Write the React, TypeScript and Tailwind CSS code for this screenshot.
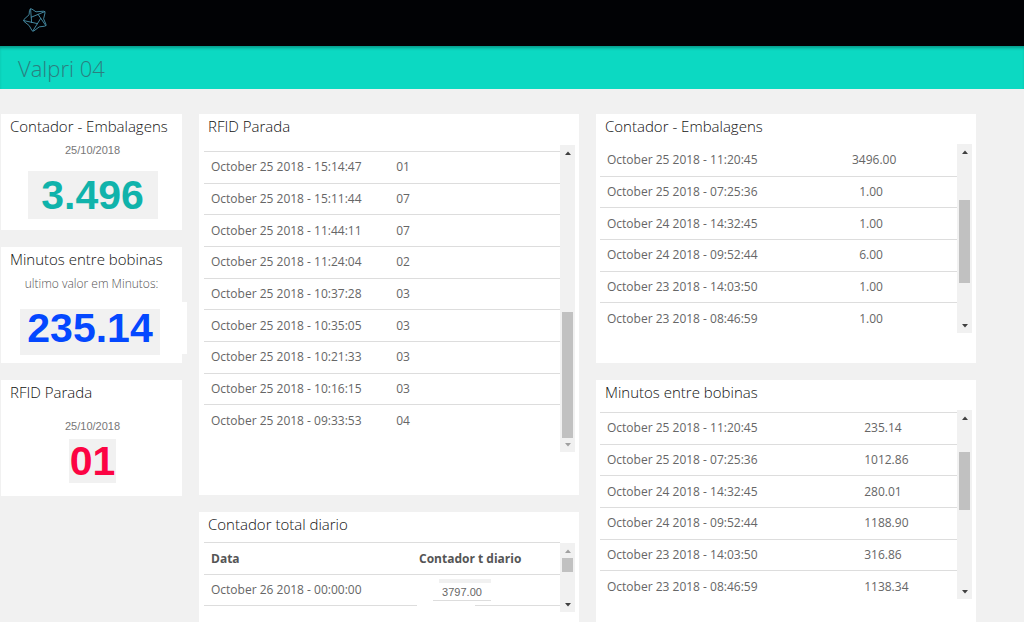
import type { ReactNode } from "react";

type Row = [string, string];

const rfidRows: Row[] = [
  ["October 25 2018 - 15:14:47", "01"],
  ["October 25 2018 - 15:11:44", "07"],
  ["October 25 2018 - 11:44:11", "07"],
  ["October 25 2018 - 11:24:04", "02"],
  ["October 25 2018 - 10:37:28", "03"],
  ["October 25 2018 - 10:35:05", "03"],
  ["October 25 2018 - 10:21:33", "03"],
  ["October 25 2018 - 10:16:15", "03"],
  ["October 25 2018 - 09:33:53", "04"],
];

const counterRows: Row[] = [
  ["October 25 2018 - 11:20:45", "3496.00"],
  ["October 25 2018 - 07:25:36", "1.00"],
  ["October 24 2018 - 14:32:45", "1.00"],
  ["October 24 2018 - 09:52:44", "6.00"],
  ["October 23 2018 - 14:03:50", "1.00"],
  ["October 23 2018 - 08:46:59", "1.00"],
];

const minuteRows: Row[] = [
  ["October 25 2018 - 11:20:45", "235.14"],
  ["October 25 2018 - 07:25:36", "1012.86"],
  ["October 24 2018 - 14:32:45", "280.01"],
  ["October 24 2018 - 09:52:44", "1188.90"],
  ["October 23 2018 - 14:03:50", "316.86"],
  ["October 23 2018 - 08:46:59", "1138.34"],
];

function Logo() {
  return (
    <svg
      viewBox="0 0 24 24"
      className="h-6 w-6"
      fill="none"
      stroke="#4a93ad"
      strokeWidth="0.9"
      strokeLinejoin="round"
      strokeLinecap="round"
      aria-hidden="true"
    >
      <path d="M6.6 2 Q7 0.3 8.8 1 L13 3.8 L20.4 3.2 Q22.4 3.2 22 5 L20.6 10.8 L23 16.4 Q23.4 18 21.6 18.2 L16.2 18.9 L11 22.8 Q9.6 23.8 8.8 22.2 L6.2 17.6 L1 13.4 Q0.2 12.4 1 11.4 L5.8 7 Z" />
      <path d="M7.6 0.9 L8.6 14.4 M21.8 3.6 L8.3 9.2 M22.8 17.6 L15.2 6.6 M9.8 23 L17.7 10.4 M0.8 12.6 L14.4 15.6" />
    </svg>
  );
}

function Card({
  title,
  className = "",
  children,
}: {
  title: string;
  className?: string;
  children: ReactNode;
}) {
  return (
    <section className={`bg-white ${className}`}>
      <h2 className="pl-[9px] text-[15px] leading-6 font-light whitespace-nowrap text-[#111]">{title}</h2>
      {children}
    </section>
  );
}

function Arrow({ down = false, muted = false }: { down?: boolean; muted?: boolean }) {
  return (
    <svg viewBox="0 0 6 4" className={`h-1 w-1.5 ${muted ? "fill-[#a0a0a0]" : "fill-[#404040]"}`} aria-hidden="true">
      <path d={down ? "M0 0H6L3 3.5Z" : "M0 4H6L3 0.5Z"} />
    </svg>
  );
}

function ScrollTrack({
  thumb,
  className = "",
  upMuted,
  downMuted,
}: {
  thumb: string;
  className?: string;
  upMuted?: boolean;
  downMuted?: boolean;
}) {
  return (
    <div className={`flex w-[15px] shrink-0 flex-col items-center bg-[#f1f1f1] ${className}`}>
      <div className="flex h-[15px] items-center">
        <Arrow muted={upMuted} />
      </div>
      <div className="min-h-0 w-[11px] flex-1">
        <div className={`bg-[#c1c1c1] ${thumb}`} />
      </div>
      <div className="flex h-[15px] items-center">
        <Arrow down muted={downMuted} />
      </div>
    </div>
  );
}

function DataTable({
  label,
  rows,
  className,
  dateClass,
  valueClass,
}: {
  label: string;
  rows: Row[];
  className: string;
  dateClass: string;
  valueClass: string;
}) {
  return (
    <table aria-label={label} className={`w-full table-fixed border-separate border-spacing-0 text-xs leading-5 text-[#666] ${className}`}>
      <tbody>
        {rows.map(([date, value]) => (
          <tr key={date} className="group">
            <td className={`border-t border-[#ddd] p-0 pl-[7px] whitespace-nowrap ${dateClass}`}>{date}</td>
            <td className={`border-t border-[#ddd] p-0 ${valueClass}`}>{value}</td>
          </tr>
        ))}
      </tbody>
    </table>
  );
}

export default function App() {
  return (
    <div className="flex min-h-screen flex-col bg-[#f1f1f1] font-['Open_Sans',sans-serif]">
      <header className="flex h-[46px] items-center bg-[#010205] pb-1.5 pl-[23px]">
        <a href="#" aria-label="Home">
          <Logo />
        </a>
      </header>
      <div className="flex h-[43px] items-center bg-[#0cd9c2] pl-[18px] shadow-[inset_0_3px_3px_-1px_rgba(0,80,75,0.45)]">
        <h1 className="text-[22px] leading-8 font-light text-[#2b7f80]">Valpri 04</h1>
      </div>

      <main className="grid flex-1 grid-cols-[181fr_380fr_380fr] gap-[17px] pt-[25px] pr-12 pl-px">
        <div className="flex flex-col gap-[17px]">
          <Card title="Contador - Embalagens" className="h-[116px]">
            <div className="flex flex-col items-center pl-0.5 font-['Liberation_Sans',sans-serif]">
              <p className="mt-1 text-[11px] leading-4 text-[#777]">25/10/2018</p>
              <p className="mt-[13px] w-[130px] bg-[#f1f1f1] text-center text-[41px] leading-[48px] font-bold text-[#10b3ab]">
                3.496
              </p>
            </div>
          </Card>

          <Card title="Minutos entre bobinas" className="relative h-[116px]">
            <div className="absolute top-[55px] -right-[5px] h-[52px] w-[5px] bg-white" />
            <p className="mt-1 text-center text-xs leading-[18px] font-light text-[#555]">ultimo valor em Minutos:</p>
            <p className="mt-4 ml-[19px] w-[140px] bg-[#f1f1f1] pb-2 text-center font-['Liberation_Sans',sans-serif] text-[41px] leading-[38px] font-bold text-[#0448ff]">
              235.14
            </p>
          </Card>

          <Card title="RFID Parada" className="h-[116px]">
            <div className="flex flex-col items-center pl-0.5 font-['Liberation_Sans',sans-serif]">
              <p className="mt-[14px] text-[11px] leading-4 text-[#777]">25/10/2018</p>
              <p className="mt-[5px] bg-[#f1f1f1] px-px text-[41px] leading-[44px] font-bold text-[#fc0443]">01</p>
            </div>
          </Card>
        </div>

        <div className="flex flex-col gap-[17px]">
          <Card title="RFID Parada" className="h-[381px]">
            <div className="mt-[7px] flex h-[307px] items-stretch pr-1 pl-[5px]">
              <div className="min-w-0 flex-1 pt-1.5">
                <DataTable
                  label="RFID Parada"
                  rows={rfidRows}
                  className="h-[285px]"
                  dateClass="w-[54%]"
                  valueClass=""
                />
              </div>
              <ScrollTrack thumb="mt-[152px] h-[126px]" downMuted />
            </div>
          </Card>

          <Card title="Contador total diario" className="flex-1">
            <div className="mt-1.5 flex items-start pr-1 pl-[5px]">
              <table className="h-16 min-w-0 flex-1 table-fixed border-separate border-spacing-0 text-left text-xs leading-5 text-[#666]">
                <thead>
                  <tr className="h-8">
                    <th className="w-[213px] border-t border-[#ddd] p-0 pl-[7px] font-bold text-[#555]">Data</th>
                    <th className="border-t border-[#ddd] p-0 pl-[2px] font-bold whitespace-nowrap text-[#555]">
                      Contador t diario
                    </th>
                  </tr>
                </thead>
                <tbody>
                  <tr className="h-8">
                    <td className="border-y border-[#ddd] p-0 pl-[7px]">October 26 2018 - 00:00:00</td>
                    <td className="border-t border-[#ddd] p-0">
                      <div className="flex h-[31px] flex-col">
                        <div className="mt-1 ml-[22px] h-1 w-[52px] bg-[#f1f1f1]" />
                        <div className="ml-4 h-[18px] w-[58px] border-b border-[#ddd] text-center font-['Liberation_Sans',sans-serif] text-[11px] leading-[18px]">
                          3797.00
                        </div>
                        <div className="mt-auto ml-[58px] h-px bg-[#ddd]" />
                      </div>
                    </td>
                  </tr>
                </tbody>
              </table>
              <ScrollTrack thumb="h-[14px]" className="mt-px h-[69px]" upMuted />
            </div>
          </Card>
        </div>

        <div className="flex flex-col gap-[17px]">
          <Card title="Contador - Embalagens" className="h-[249px]">
            <div className="mt-1.5 flex h-[189px] pr-1 pl-1">
              <div className="min-w-0 flex-1 overflow-hidden">
                <DataTable
                  label="Contador - Embalagens"
                  rows={counterRows}
                  className="h-[190px]"
                  dateClass="w-[53%] group-first:border-white"
                  valueClass="pr-1 text-center group-first:border-white group-first:pr-0 group-first:pl-0.5"
                />
              </div>
              <ScrollTrack thumb="mt-[41px] h-[83px]" />
            </div>
          </Card>

          <Card title="Minutos entre bobinas" className="flex-1">
            <div className="mt-1.5 flex h-[189px] pr-1 pl-1">
              <div className="min-w-0 flex-1 overflow-hidden pt-0.5">
                <DataTable
                  label="Minutos entre bobinas"
                  rows={minuteRows}
                  className="h-[190px]"
                  dateClass="w-[74%]"
                  valueClass=""
                />
              </div>
              <ScrollTrack thumb="mt-[27px] h-[58px]" />
            </div>
          </Card>
        </div>
      </main>
    </div>
  );
}
